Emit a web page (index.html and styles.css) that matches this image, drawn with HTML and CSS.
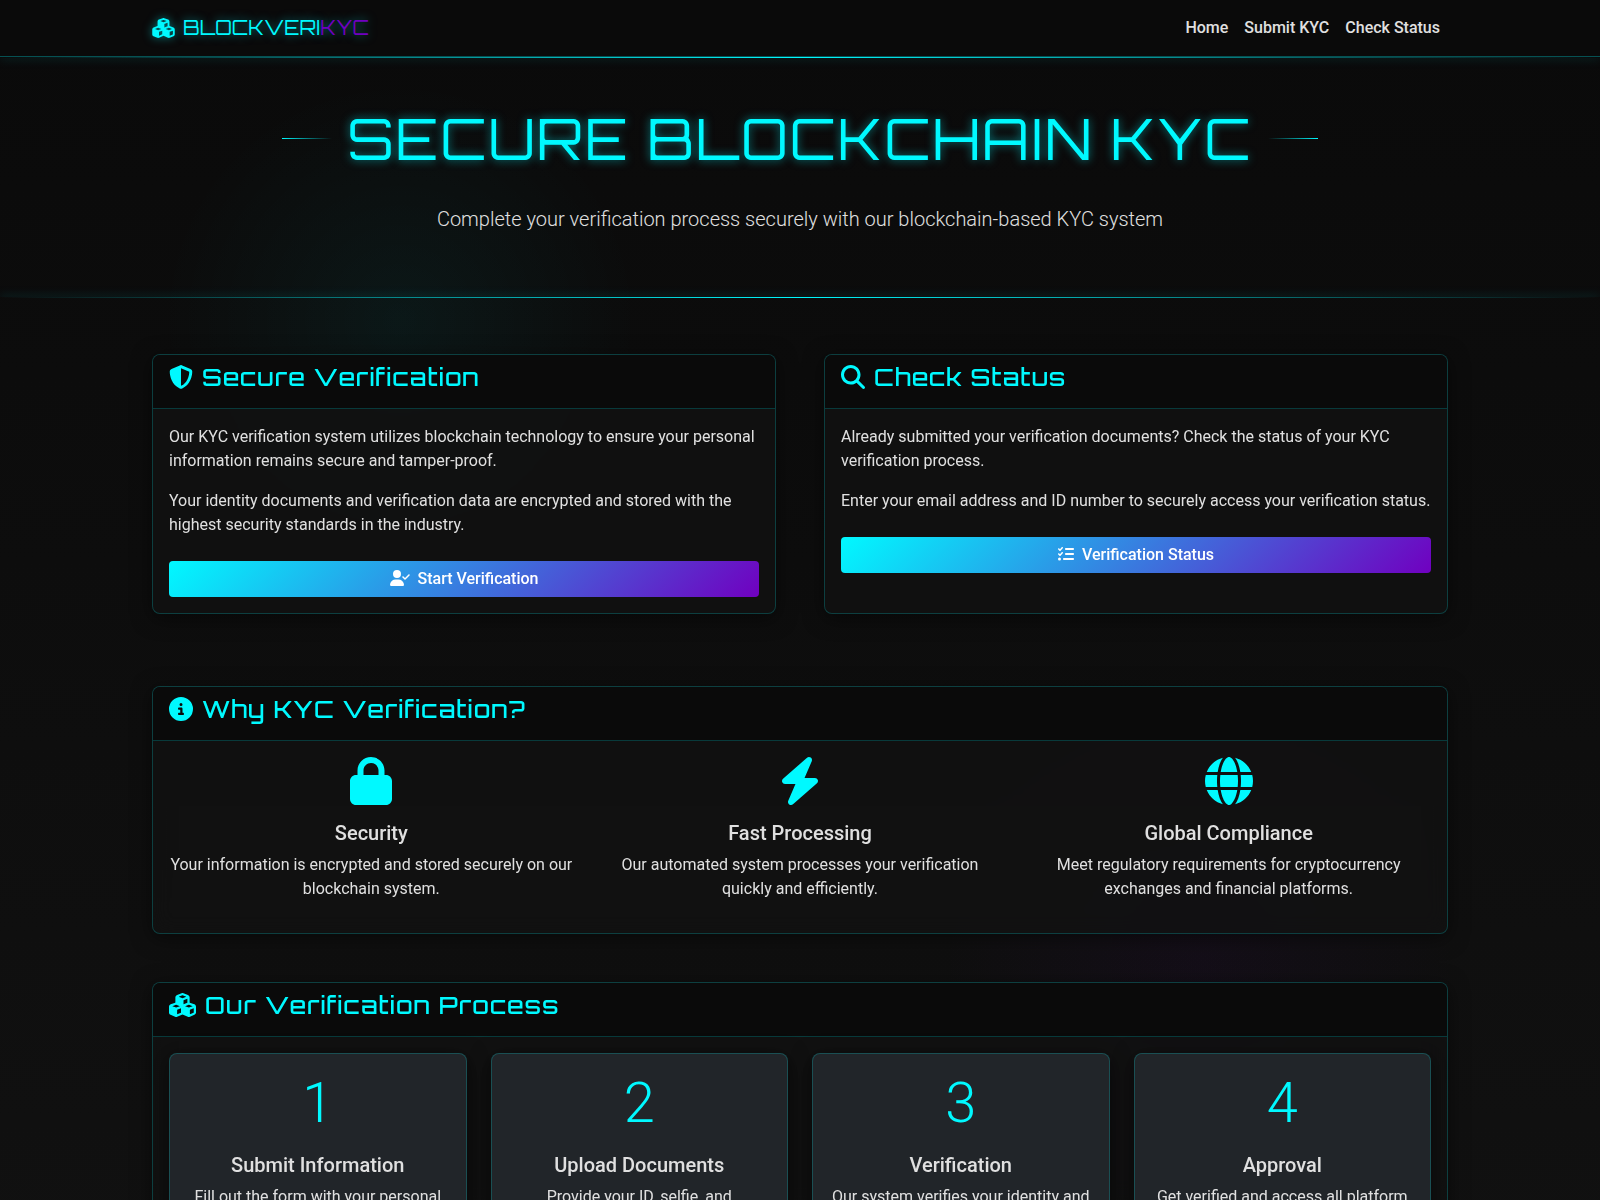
FILE: index.html
```html
<!DOCTYPE html>
<html lang="en">
<head>
<meta charset="utf-8">
<meta name="viewport" content="width=device-width, initial-scale=1">
<title>BlockVeriKYC</title>
<link rel="stylesheet" href="styles.css">
</head>
<body>
<svg class="sprite" aria-hidden="true">
  <symbol id="cubes" viewBox="0 0 576 512"><path d="M290.8 48.6l78.4 29.7L288 109.5 206.8 78.3l78.4-29.7c1.8-.7 3.8-.7 5.7 0zM136 92.5V204.7c-1.3 .4-2.6 .8-3.9 1.3l-96 36.4C14.4 250.6 0 271.5 0 294.7V413.9c0 22.2 13.1 42.3 33.5 51.3l96 42.2c14.4 6.3 30.7 6.3 45.1 0L288 457.5l113.5 49.9c14.4 6.3 30.7 6.3 45.1 0l96-42.2c20.3-8.9 33.5-29.1 33.5-51.3V294.7c0-23.3-14.4-44.1-36.1-52.4l-96-36.4c-1.3-.5-2.6-.9-3.9-1.3V92.5c0-23.3-14.4-44.1-36.1-52.4l-96-36.4c-12.8-4.8-26.9-4.8-39.7 0l-96 36.4C150.4 48.4 136 69.3 136 92.5zM392 210.6l-82.4 31.2V152.6L392 121v89.6zM154.8 250.9l78.4 29.7L152 311.7 70.8 280.6l78.4-29.7c1.8-.7 3.8-.7 5.7 0zm18.8 204.4V354.8L256 323.2v95.9l-82.4 36.2zM421.2 250.9c1.8-.7 3.8-.7 5.7 0l78.4 29.7L424 311.7l-81.2-31.1 78.4-29.7zM523.2 421.2l-77.6 34.1V354.8L528 323.2v90.7c0 3.2-1.9 6-4.8 7.3z"/></symbol>
  <symbol id="shield" viewBox="0 0 512 512"><path d="M256 0c4.6 0 9.2 1 13.4 2.9L457.7 82.8c22 9.3 38.4 31 38.3 57.2c-.5 99.2-41.3 280.7-213.6 363.2c-16.7 8-36.1 8-52.8 0C57.3 420.7 16.5 239.2 16 140c-.1-26.2 16.3-47.9 38.3-57.2L242.7 2.9C246.8 1 251.4 0 256 0zm0 66.8V444.8C394 378 431.1 230.1 432 141.4L256 66.8z"/></symbol>
  <symbol id="search" viewBox="0 0 512 512"><path d="M416 208c0 45.9-14.9 88.3-40 122.7L502.6 457.4c12.5 12.5 12.5 32.8 0 45.3s-32.8 12.5-45.3 0L330.7 376c-34.4 25.2-76.8 40-122.7 40C93.1 416 0 322.9 0 208S93.1 0 208 0S416 93.1 416 208zM208 352a144 144 0 1 0 0-288 144 144 0 1 0 0 288z"/></symbol>
  <symbol id="info" viewBox="0 0 512 512"><path d="M256 512A256 256 0 1 0 256 0a256 256 0 1 0 0 512zM216 336h24V272H216c-13.3 0-24-10.7-24-24s10.7-24 24-24h48c13.3 0 24 10.7 24 24v88h8c13.3 0 24 10.7 24 24s-10.7 24-24 24H216c-13.3 0-24-10.7-24-24s10.7-24 24-24zm40-208a32 32 0 1 1 0 64 32 32 0 1 1 0-64z"/></symbol>
  <symbol id="user-check" viewBox="0 0 640 512"><path d="M96 128a128 128 0 1 1 256 0A128 128 0 1 1 96 128zM0 482.3C0 383.8 79.8 304 178.3 304h91.4C368.2 304 448 383.8 448 482.3c0 16.4-13.3 29.7-29.7 29.7H29.7C13.3 512 0 498.7 0 482.3zM625 177L497 305c-9.4 9.4-24.6 9.4-33.9 0l-64-64c-9.4-9.4-9.4-24.6 0-33.9s24.6-9.4 33.9 0l47 47L591 143c9.4-9.4 24.6-9.4 33.9 0s9.4 24.6 0 33.9z"/></symbol>
  <symbol id="list-check" viewBox="0 0 512 512"><path d="M152.1 38.2c9.9 8.9 10.7 24 1.8 33.9l-72 80c-4.4 4.9-10.6 7.8-17.2 7.9s-12.9-2.4-17.6-7L7 113C-2.3 103.6-2.3 88.4 7 79s24.6-9.4 33.9 0l22.1 22.1 55.1-61.2c8.9-9.9 24-10.7 33.9-1.8zM152.1 198.2c9.9 8.9 10.7 24 1.8 33.9l-72 80c-4.4 4.9-10.6 7.8-17.2 7.9s-12.9-2.4-17.6-7L7 273c-9.3-9.4-9.3-24.6 0-34s24.6-9.4 33.9 0l22.1 22.1 55.1-61.2c8.9-9.9 24-10.7 33.9-1.8zM224 96c0-17.7 14.3-32 32-32H480c17.7 0 32 14.3 32 32s-14.3 32-32 32H256c-17.7 0-32-14.3-32-32zm0 160c0-17.7 14.3-32 32-32H480c17.7 0 32 14.3 32 32s-14.3 32-32 32H256c-17.7 0-32-14.3-32-32zM160 416c0-17.7 14.3-32 32-32H480c17.7 0 32 14.3 32 32s-14.3 32-32 32H192c-17.7 0-32-14.3-32-32zM48 368a48 48 0 1 1 0 96 48 48 0 1 1 0-96z"/></symbol>
  <symbol id="lock" viewBox="0 0 448 512"><path d="M144 144v48H304V144c0-44.2-35.8-80-80-80s-80 35.8-80 80zM80 192V144C80 64.5 144.5 0 224 0s144 64.5 144 144v48h16c35.3 0 64 28.7 64 64V448c0 35.3-28.7 64-64 64H64c-35.3 0-64-28.7-64-64V256c0-35.3 28.7-64 64-64H80z"/></symbol>
  <symbol id="bolt" viewBox="0 0 448 512"><path d="M349.4 44.6c5.9-13.7 1.5-29.7-10.6-38.5s-28.6-8-39.9 1.8l-256 224c-10 8.8-13.6 22.9-8.9 35.3S50.7 288 64 288H175.5L98.6 467.4c-5.9 13.7-1.5 29.7 10.6 38.5s28.6 8 39.9-1.8l256-224c10-8.8 13.6-22.9 8.9-35.3s-16.6-20.7-30-20.7H272.5L349.4 44.6z"/></symbol>
  <symbol id="globe" viewBox="0 0 512 512"><path d="M352 256c0 22.2-1.2 43.6-3.3 64H163.3c-2.2-20.4-3.3-41.8-3.3-64s1.2-43.6 3.3-64H348.7c2.2 20.4 3.3 41.8 3.3 64zm28.8-64H503.9c5.3 20.5 8.1 41.9 8.1 64s-2.8 43.5-8.1 64H380.8c2.1-20.6 3.2-42 3.2-64s-1.1-43.4-3.2-64zm112.6-32H376.7c-10-63.9-29.8-117.4-55.3-151.6c78.3 20.7 142 77.5 171.9 151.6zm-149.1 0H167.7c6.1-36.4 15.5-68.6 27-94.7c10.5-23.6 22.2-40.7 33.5-51.5C239.4 3.2 248.7 0 256 0s16.6 3.2 27.8 13.8c11.3 10.8 23 27.9 33.5 51.5c11.6 26 20.9 58.2 27 94.7zm-209 0H18.6C48.6 85.9 112.2 29.1 190.6 8.4C165.1 42.6 145.3 96.1 135.3 160zM8.1 192H131.2c-2.1 20.6-3.2 42-3.2 64s1.1 43.4 3.2 64H8.1C2.8 299.5 0 278.1 0 256s2.8-43.5 8.1-64zM194.7 446.6c-11.6-26-20.9-58.2-27-94.6H344.3c-6.1 36.4-15.5 68.6-27 94.6c-10.5 23.6-22.2 40.7-33.5 51.5C272.6 508.8 263.3 512 256 512s-16.6-3.2-27.8-13.8c-11.3-10.8-23-27.9-33.5-51.5zM135.3 352c10 63.9 29.8 117.4 55.3 151.6C112.2 482.9 48.6 426.1 18.6 352H135.3zm358.1 0c-30 74.1-93.6 130.9-171.9 151.6c25.5-34.2 45.2-87.7 55.3-151.6H493.4z"/></symbol>
</svg>

<header class="navbar">
  <div class="container navbar-inner">
    <a class="brand" href="#"><svg class="icon brand-icon"><use href="#cubes"/></svg><span>BLOCKVERI<span class="brand-accent">KYC</span></span></a>
    <nav class="nav-links">
      <a href="#">Home</a>
      <a href="#submit">Submit KYC</a>
      <a href="#status">Check Status</a>
    </nav>
  </div>
</header>

<section class="hero">
  <div class="hero-title">
    <h1>SECURE BLOCKCHAIN KYC</h1>
  </div>
  <p class="lead">Complete your verification process securely with our blockchain-based KYC system</p>
</section>

<main class="container main">
  <div class="actions">
    <section class="card" id="submit">
      <h2 class="card-header"><svg class="icon"><use href="#shield"/></svg>Secure Verification</h2>
      <div class="card-body">
        <p>Our KYC verification system utilizes blockchain technology to ensure your personal information remains secure and tamper-proof.</p>
        <p>Your identity documents and verification data are encrypted and stored with the highest security standards in the industry.</p>
        <a class="btn" href="#submit"><svg class="icon btn-icon-wide"><use href="#user-check"/></svg>Start Verification</a>
      </div>
    </section>
    <section class="card" id="status">
      <h2 class="card-header"><svg class="icon"><use href="#search"/></svg>Check Status</h2>
      <div class="card-body">
        <p>Already submitted your verification documents? Check the status of your KYC verification process.</p>
        <p>Enter your email address and ID number to securely access your verification status.</p>
        <a class="btn" href="#status"><svg class="icon btn-icon"><use href="#list-check"/></svg>Verification Status</a>
      </div>
    </section>
  </div>

  <section class="card">
    <h2 class="card-header"><svg class="icon"><use href="#info"/></svg>Why KYC Verification?</h2>
    <div class="card-body features">
      <div class="feature">
        <svg class="icon feature-icon"><use href="#lock"/></svg>
        <h3>Security</h3>
        <p>Your information is encrypted and stored securely on our blockchain system.</p>
      </div>
      <div class="feature">
        <svg class="icon feature-icon"><use href="#bolt"/></svg>
        <h3>Fast Processing</h3>
        <p>Our automated system processes your verification quickly and efficiently.</p>
      </div>
      <div class="feature">
        <svg class="icon feature-icon"><use href="#globe"/></svg>
        <h3>Global Compliance</h3>
        <p>Meet regulatory requirements for cryptocurrency exchanges and financial platforms.</p>
      </div>
    </div>
  </section>

  <section class="card">
    <h2 class="card-header"><svg class="icon icon-cubes"><use href="#cubes"/></svg>Our Verification Process</h2>
    <div class="card-body steps">
      <div class="step">
        <div class="step-number">1</div>
        <h3>Submit Information</h3>
        <p>Fill out the form with your personal</p>
      </div>
      <div class="step">
        <div class="step-number">2</div>
        <h3>Upload Documents</h3>
        <p>Provide your ID, selfie, and</p>
      </div>
      <div class="step">
        <div class="step-number">3</div>
        <h3>Verification</h3>
        <p>Our system verifies your identity and</p>
      </div>
      <div class="step">
        <div class="step-number">4</div>
        <h3>Approval</h3>
        <p>Get verified and access all platform</p>
      </div>
    </div>
  </section>
</main>
</body>
</html>
```
FILE: styles.css
```css
:root {
  --cyan: #00f9ff;
  --purple: #7000c0;
  --text: #e0e0e0;
  --line: rgba(0, 249, 255, 0.2);
  --display: Orbitron, "DejaVu Sans", sans-serif;
}

*, *::before, *::after { box-sizing: border-box; }

body {
  margin: 0;
  min-height: 100vh;
  font-family: Roboto, sans-serif;
  font-size: 16px;
  line-height: 24px;
  color: var(--text);
  background:
    radial-gradient(circle at 25% 320px, rgba(0, 249, 255, 0.05), transparent 240px),
    radial-gradient(circle at 75% 960px, rgba(112, 0, 192, 0.05), transparent 260px),
    linear-gradient(#0a0a0a, #111111);
}

h1, h2, h3, p { margin: 0; }
a { color: inherit; text-decoration: none; }

.sprite { display: none; }

.icon {
  flex: none;
  width: 24px;
  height: 24px;
  fill: currentColor;
}

.container {
  max-width: 1320px;
  margin: 0 auto;
  padding: 0 12px;
}

/* Navigation */
.navbar {
  background: #0a0a0a;
  border-bottom: 1px solid rgba(0, 249, 255, 0.3);
}

.navbar-inner {
  display: flex;
  align-items: center;
  justify-content: space-between;
  min-height: 56px;
}

.brand {
  display: flex;
  align-items: center;
  gap: 8px;
  font-family: var(--display);
  font-size: 20px;
  color: var(--cyan);
  text-shadow: 0 0 10px rgba(0, 249, 255, 0.5);
}

.brand-icon {
  width: 23px;
  height: 20px;
  overflow: visible;
  filter: drop-shadow(0 0 5px rgba(0, 249, 255, 0.5));
}

.brand-accent { color: var(--purple); }

.nav-links { display: flex; }

.nav-links a {
  padding: 8px;
  font-weight: 500;
}

/* Hero */
.hero {
  position: relative;
  overflow: hidden;
  padding: 48px 12px 64px;
  text-align: center;
}

.hero::before,
.hero::after {
  content: "";
  position: absolute;
  left: 0;
  right: 0;
  height: 1px;
  background: linear-gradient(90deg, transparent, var(--cyan), transparent);
  box-shadow: 0 0 10px rgba(0, 249, 255, 0.5);
}

.hero::before { top: 0; }
.hero::after { bottom: 0; }

.hero-title {
  display: flex;
  align-items: center;
  justify-content: space-between;
  max-width: 1036px;
  margin: 0 auto 32px;
}

.hero-title::before,
.hero-title::after {
  content: "";
  width: 50px;
  height: 1px;
  background: linear-gradient(90deg, var(--cyan), transparent);
}

.hero-title::after {
  background: linear-gradient(90deg, transparent, var(--cyan));
}

.hero h1 {
  font-family: var(--display);
  font-size: 56px;
  font-weight: 400;
  line-height: 67px;
  letter-spacing: 2px;
  color: var(--cyan);
  text-shadow: 0 0 10px rgba(0, 249, 255, 0.5);
}

.lead {
  font-size: 20px;
  font-weight: 300;
  line-height: 30px;
}

/* Cards */
.main {
  display: flex;
  flex-direction: column;
  gap: 48px;
  padding-top: 56px;
  padding-bottom: 48px;
}

.actions {
  display: grid;
  grid-template-columns: 1fr 1fr;
  gap: 48px;
  margin-bottom: 24px;
}

.card {
  overflow: hidden;
  border: 1px solid var(--line);
  border-radius: 8px;
  background: rgba(17, 17, 17, 0.8);
  box-shadow: 0 4px 20px rgba(0, 0, 0, 0.5);
  backdrop-filter: blur(10px);
}

.card-header {
  display: flex;
  align-items: flex-start;
  gap: 9px;
  padding: 8px 16px 16px;
  border-bottom: 1px solid var(--line);
  background: #0a0a0a;
  font-family: var(--display);
  font-size: 24px;
  font-weight: 500;
  line-height: 29px;
  letter-spacing: 1px;
  color: var(--cyan);
}

.card-header .icon { margin-top: 2px; }

.icon-cubes { width: 27px; }

.card-body { padding: 16px; }
.card-body p { margin-bottom: 16px; }

.btn {
  display: flex;
  align-items: center;
  justify-content: center;
  gap: 8px;
  height: 36px;
  margin-top: 24px;
  border-radius: 4px;
  background: linear-gradient(135deg, var(--cyan), var(--purple));
  color: #ffffff;
  font-weight: 500;
}

.btn .icon { margin-bottom: 2px; }
.btn-icon { width: 16px; height: 16px; }
.btn-icon-wide { width: 20px; height: 16px; }

h3 {
  margin-bottom: 8px;
  font-size: 20px;
  font-weight: 500;
  line-height: 24px;
}

/* Benefits */
.features {
  display: grid;
  grid-template-columns: repeat(3, 1fr);
  gap: 24px;
  text-align: center;
}

.feature-icon {
  display: block;
  width: 48px;
  height: 48px;
  margin: 0 auto 16px;
  color: var(--cyan);
}

/* Process steps */
.steps {
  display: grid;
  grid-template-columns: repeat(4, 1fr);
  gap: 24px;
}

.step {
  padding: 16px;
  border: 1px solid var(--line);
  border-radius: 8px;
  background: #212529;
  box-shadow: 0 4px 20px rgba(0, 0, 0, 0.5);
  text-align: center;
}

.step-number {
  margin-bottom: 16px;
  font-size: 56px;
  font-weight: 300;
  line-height: 67px;
  color: var(--cyan);
}
```
